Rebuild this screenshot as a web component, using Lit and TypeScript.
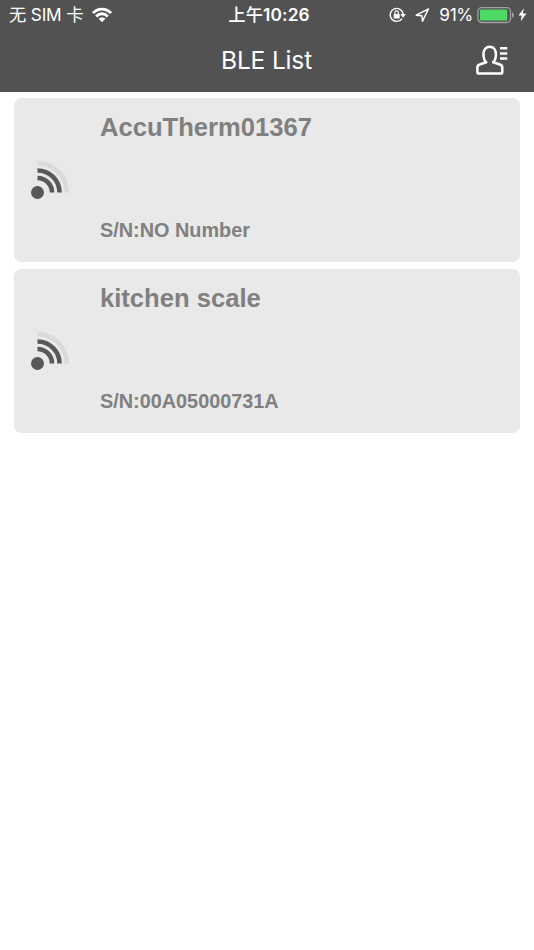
import { LitElement, html, css } from "lit";
import { customElement, property } from "lit/decorators.js";

@customElement("status-bar")
class StatusBar extends LitElement {
  static styles = css`
    :host {
      display: grid;
      grid-template-columns: 1fr auto 1fr;
      align-items: center;
      height: 30px;
      color: #fff;
      font: 400 17.3px/30px Inter, "Noto Sans CJK SC", sans-serif;
      white-space: nowrap;
    }
    .left, .right { display: flex; align-items: center; }
    .left { padding-left: 9px; gap: 9px; }
    .carrier { letter-spacing: -0.2px; }
    .time { font-weight: 600; padding-left: 4px; letter-spacing: 0.1px; }
    .ampm { font-weight: 500; }
    .right { justify-content: flex-end; padding-right: 7px; }
    .percent { letter-spacing: -0.35px; margin: 0 4px 0 9px; }
    .arrow { margin-left: 8px; }
    .bolt { margin-left: 3px; }
    svg { display: block; flex: none; }
  `;
  render() {
    return html`
      <div class="left">
        <span class="carrier">无 SIM 卡</span>
        <svg width="20" height="16" viewBox="0 0 20 16" fill="none" stroke="#fff" stroke-width="2.9">
          <path d="M1 6.1C6 .8 14 .8 19 6.1M4.2 9.4c3.3-3.5 8.3-3.5 11.6 0" />
          <path d="M6.6 11.8c1.9-1.9 4.9-1.9 6.8 0L10 15.2Z" fill="#fff" stroke="none" />
        </svg>
      </div>
      <div class="time"><span class="ampm">上午</span>10:26</div>
      <div class="right">
        <svg width="17" height="16" viewBox="0 0 17 16" fill="none" stroke="#fff" stroke-width="1.4">
          <path d="M13.1 11.6A6.5 6.5 0 1 1 14.2 7.2" />
          <path d="M11.3 7h5.6l-2.8 3.8Z" fill="#fff" stroke="none" />
          <rect x="4.7" y="7" width="6" height="4.5" rx=".6" fill="#fff" stroke="none" />
          <path d="M6 7V5.6a1.7 1.7 0 0 1 3.4 0V7" stroke-width="1.2" />
        </svg>
        <svg class="arrow" width="16" height="15" viewBox="0 0 16 15" fill="none" stroke="#fff" stroke-width="1.5" stroke-linejoin="round">
          <path d="M14.4 1 2.2 7.2l5.7.5.6 5.600Z" />
        </svg>
        <span class="percent">91%</span>
        <svg width="38" height="17" viewBox="0 0 38 17">
          <rect x=".9" y=".5" width="32.6" height="15" rx="4" fill="none" stroke="#a0a0a0" stroke-width="1.3" />
          <rect x="3" y="2.6" width="27.2" height="10.800" rx="1" fill="#4cd964" />
          <path d="M35 5.2c2.6.7 2.6 4.9 0 5.6Z" fill="#a0a0a0" />
        </svg>
        <svg class="bolt" width="9" height="14" viewBox="0 0 9 14">
          <path d="M5.800.2.5 7.4h3.100L2.700 13.300 8.500 5.600H4.900Z" fill="#fff" />
        </svg>
      </div>
    `;
  }
}

@customElement("nav-header")
class NavHeader extends LitElement {
  static styles = css`
    :host {
      display: grid;
      grid-template-columns: 1fr auto 1fr;
      align-items: center;
      height: 61.5px;
      color: #fff;
    }
    .title {
      grid-column: 2;
      font: 400 24.6px/58px Inter, sans-serif;
      letter-spacing: -0.2px;
      padding: 0 1px 1px 0;
    }
    .profile { justify-self: end; margin-right: 25px; }
  `;
  render() {
    return html`
      <span class="title">BLE List</span>
      <svg class="profile" width="34" height="31" viewBox="0 0 34 31" fill="none" stroke="#fff" stroke-width="2.5" stroke-linejoin="round">
        <path d="M11.3 17.2C9.500 15.800 8.500 12.700 8.500 9.200c0-4.600 2.500-7.500 6.200-7.500s6.200 2.900 6.200 7.500c0 3.500-1 6.600-2.800 8l6.900 2.300c1.600.5 2.300 1.600 2.300 3.200v4.300c0 1-.6 1.600-1.600 1.600H4c-1 0-1.600-.6-1.600-1.600v-4.300c0-1.600.7-2.700 2.300-3.200Z" />
        <path d="M25 3.300h7.300M25 8.400h7.300M25 13.500h7.300" />
      </svg>
    `;
  }
}

@customElement("device-card")
class DeviceCard extends LitElement {
  @property() name = "";
  @property() serial = "";
  static styles = css`
    :host {
      display: flex;
      align-items: center;
      box-sizing: border-box;
      height: 164px;
      padding-left: 16px;
      border-radius: 7px;
      background: #e9e9e9;
      color: #808080;
      font-family: "Liberation Sans", Arial, sans-serif;
      font-weight: 700;
    }
    .signal { flex: none; display: block; }
    .info {
      display: flex;
      flex-direction: column;
      justify-content: space-between;
      box-sizing: border-box;
      height: 100%;
      margin-left: 29.6px;
      padding: 14px 0 20px;
    }
    .name { font-size: 25.6px; line-height: 31px; }
    .serial { font-size: 19.85px; line-height: 24px; }
  `;
  render() {
    return html`
      <svg class="signal" width="40" height="40" viewBox="0 0 40 40" fill="none" stroke="#58585a" stroke-width="4.6">
        <circle cx="7.5" cy="32.500" r="6.5" fill="#58585a" stroke="none" />
        <path d="M7.5 18A14.500 14.500 0 0 1 22 32.500M7.5 10.500A22 22 0 0 1 29.500 32.500" />
        <path d="M7.5 3.200A29.300 29.300 0 0 1 36.800 32.500" stroke="#d9dadb" stroke-width="4.5" />
      </svg>
      <div class="info">
        <span class="name">${this.name}</span>
        <span class="serial">S/N:${this.serial}</span>
      </div>
    `;
  }
}

@customElement("app-root")
class AppRoot extends LitElement {
  static styles = css`
    :host { display: block; min-height: 100vh; background: #fff; }
    header { background: #525252; }
    main { display: flex; flex-direction: column; gap: 7px; padding: 6.9px 14.4px; }
  `;
  private devices = [
    { name: "AccuTherm01367", serial: "NO Number" },
    { name: "kitchen scale", serial: "00A05000731A" },
  ];
  render() {
    return html`
      <header>
        <status-bar></status-bar>
        <nav-header></nav-header>
      </header>
      <main>
        ${this.devices.map((d) => html`<device-card .name=${d.name} .serial=${d.serial}></device-card>`)}
      </main>
    `;
  }
}
